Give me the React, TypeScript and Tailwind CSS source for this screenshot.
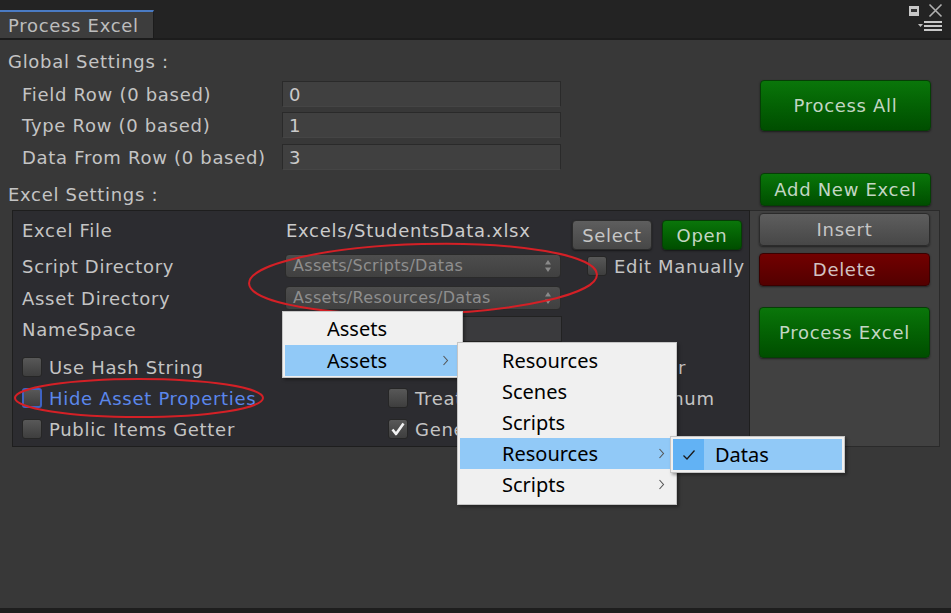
import React from "react";

type Tone = "green" | "gray" | "red";

const tones: Record<Tone, string> = {
    green: "bg-linear-to-b from-[#0a760a] to-[#004e00] border-[#053f05] text-[#c3d6c3]",
    gray: "bg-linear-to-b from-[#5e5e5e] to-[#474747] border-[#2b2b2b] text-[#c6c6c6]",
    red: "bg-linear-to-b from-[#720000] to-[#530000] border-[#3a0000] text-[#d2c2c2]",
};

function UButton({ label, tone, className }: { label: string; tone: Tone; className: string }) {
    return (
        <div
            className={`flex items-center justify-center rounded-[4px] border shadow-[0_1px_2px_rgba(0,0,0,0.5)] ${tones[tone]} ${className}`}
        >
            {label}
        </div>
    );
}

function CheckBox({ checked, focus }: { checked?: boolean; focus?: boolean }) {
    return (
        <div
            className={`flex h-[20px] w-[20px] shrink-0 items-center justify-center rounded-[3px] bg-linear-to-b from-[#585858] to-[#3e3e3e] ${
                focus ? "border-2 border-[#3e63c4]" : "border border-[#262626]"
            }`}
        >
            {checked && (
                <svg width="16" height="16" viewBox="0 0 16 16">
                    <path d="M2.5 8.5 L6 13 L13.5 2.5" fill="none" stroke="#f2f2f2" strokeWidth="2.6" strokeLinejoin="round" />
                </svg>
            )}
        </div>
    );
}

function CheckRow({ label, checked, focus }: { label: string; checked?: boolean; focus?: boolean }) {
    return (
        <div className="flex h-[20px] items-center gap-[7px] whitespace-nowrap">
            <CheckBox checked={checked} focus={focus} />
            <span className={focus ? "text-[#5b87ec]" : ""}>{label}</span>
        </div>
    );
}

// unity style popup field with the up/down arrows
function Popup({ text, className }: { text: string; className: string }) {
    return (
        <div
            className={`flex items-center justify-between rounded-[4px] border border-[#2a2a2a] bg-linear-to-b from-[#4d4d4d] to-[#404040] pl-[7px] pr-[8px] text-[16px] tracking-[0.3px] text-[#8e8e8e] ${className}`}
        >
            <span className="whitespace-nowrap">{text}</span>
            <svg width="8" height="14" viewBox="0 0 8 14">
                <path d="M4 1 L7 5.5 H1 Z M4 13 L7 8.5 H1 Z" fill="#8a8a8a" />
            </svg>
        </div>
    );
}

function Chevron() {
    return (
        <svg width="7" height="11" viewBox="0 0 7 11">
            <path d="M1.5 1 L5.5 5.5 L1.5 10" fill="none" stroke="#555" strokeWidth="1.1" />
        </svg>
    );
}

function MenuItem({ label, active, arrow }: { label: string; active?: boolean; arrow?: boolean }) {
    return (
        <div className={`flex h-[31px] items-center justify-between pl-[42px] pr-[10px] ${active ? "bg-[#91c9f7]" : ""}`}>
            <span>{label}</span>
            {arrow && <Chevron />}
        </div>
    );
}

export default function App() {
    return (
        <div className="relative flex h-[613px] w-[951px] flex-col overflow-hidden bg-[#383838] font-['DejaVu_Sans',sans-serif] text-[18px] tracking-[0.7px] text-[#c4c4c4]">
            {/* title bar */}
            <div className="relative flex h-[40px] shrink-0 items-end border-b-2 border-[#1c1c1c] bg-[#232323]">
                <div className="flex h-[28px] w-[154px] items-center border-t-2 border-r border-t-[#4a7bc4] border-r-[#1c1c1c] bg-[#3d3d3d] pl-[8px] text-[#bdbdbd]">
                    Process Excel
                </div>
                <div className="absolute right-[8px] top-[3px] flex flex-col items-end gap-[3px]">
                    <div className="flex items-center gap-[9px]">
                        <div className="flex h-[10px] w-[10px] items-center justify-center bg-[#c8c8c8]">
                            <div className="h-[3px] w-[6px] bg-[#333]" />
                        </div>
                        <svg width="15" height="15" viewBox="0 0 15 15">
                            <path d="M1.5 1.5 L13.5 13.5 M13.5 1.5 L1.5 13.5" stroke="#b0b0b0" strokeWidth="1.6" />
                        </svg>
                    </div>
                    <svg width="25" height="11" viewBox="0 0 25 11">
                        <path d="M0 3 H5 L2.5 6 Z" fill="#bdbdbd" />
                        <path d="M6 1 H24 M6 5 H24 M6 9 H24" stroke="#c8c8c8" strokeWidth="2" />
                    </svg>
                </div>
            </div>

            {/* global settings */}
            <div className="flex h-[170px] shrink-0">
                <div className="flex-1 pl-[8px]">
                    <div className="mt-[11px] h-[22px] leading-[22px]">Global Settings :</div>
                    {[
                        ["Field Row (0 based)", "0", "mt-[8px]"],
                        ["Type Row (0 based)", "1", "mt-[5px]"],
                        ["Data From Row (0 based)", "3", "mt-[6px]"],
                    ].map(([label, value, mt]) => (
                        <div key={label} className={`flex h-[26px] items-center ${mt}`}>
                            <span className="w-[274px] pl-[14px] whitespace-nowrap">{label}</span>
                            <div className="flex h-[26px] w-[279px] items-center border border-[#2a2a2a] border-b-[#454545] bg-[#404040] pl-[6px] text-[#cacaca]">
                                {value}
                            </div>
                        </div>
                    ))}
                    <div className="mt-[14px] h-[22px] leading-[22px]">Excel Settings :</div>
                </div>
                <div className="mr-[20px] w-[171px]">
                    <UButton label="Process All" tone="green" className="mt-[40px] h-[51px]" />
                    <UButton label="Add New Excel" tone="green" className="mt-[42px] h-[33px]" />
                </div>
            </div>

            {/* excel settings */}
            <div className="ml-[12px] flex h-[237px] shrink-0">
                <div className="w-[738px] border border-[#1e1e1e] bg-[#2c2c30] pl-[9px] pt-[9px]">
                    <div className="flex h-[30px] items-center">
                        <span className="-mt-[9px] w-[263px]">Excel File</span>
                        <span className="-mt-[9px] w-[287px] pl-[1px] text-[#cbcbcb]">Excels/StudentsData.xlsx</span>
                        <UButton label="Select" tone="gray" className="h-[30px] w-[80px]" />
                        <UButton label="Open" tone="green" className="ml-[10px] h-[30px] w-[80px]" />
                    </div>
                    <div className="mt-[4px] flex h-[24px] items-center">
                        <span className="w-[263px]">Script Directory</span>
                        <Popup text="Assets/Scripts/Datas" className="h-[24px] w-[276px]" />
                        <div className="ml-[26px]">
                            <CheckRow label="Edit Manually" />
                        </div>
                    </div>
                    <div className="mt-[8px] flex h-[24px] items-center">
                        <span className="w-[263px]">Asset Directory</span>
                        <Popup text="Assets/Resources/Datas" className="h-[24px] w-[276px]" />
                    </div>
                    <div className="mt-[6px] flex h-[26px] items-center">
                        <span className="w-[263px]">NameSpace</span>
                        <div className="h-[26px] w-[277px] border border-[#222] bg-[#3a3a3d]" />
                    </div>
                    <div className="mt-[15px] grid grid-cols-[366px_149px_1fr] gap-y-[11px]">
                        <CheckRow label="Use Hash String" />
                        <CheckRow label="Use Int Key" />
                        <CheckRow label="Items Getter" />
                        <CheckRow label="Hide Asset Properties" focus />
                        <CheckRow label="Treat Unknown" />
                        <CheckRow label="Generate Enum" />
                        <CheckRow label="Public Items Getter" />
                        <CheckRow label="Generate Get" checked />
                        <div />
                    </div>
                </div>
                <div className="w-[190px] border-y border-r border-[#2a2a2a] bg-[#414141] pl-[9px] pt-[2px]">
                    <UButton label="Insert" tone="gray" className="h-[33px] w-[171px]" />
                    <UButton label="Delete" tone="red" className="mt-[7px] h-[33px] w-[171px]" />
                    <UButton label="Process Excel" tone="green" className="mt-[21px] h-[51px] w-[171px]" />
                </div>
            </div>

            <div className="flex-1" />
            <div className="h-[5px] shrink-0 bg-[#1e1e1e]" />

            {/* red annotation ellipses */}
            <svg className="pointer-events-none absolute left-0 top-0" width="951" height="613">
                <ellipse cx="423" cy="279" rx="174" ry="35" fill="none" stroke="#d42026" strokeWidth="2" transform="rotate(-1.5 423 279)" />
                <ellipse cx="139" cy="398" rx="124" ry="19" fill="none" stroke="#d42026" strokeWidth="2" />
            </svg>

            {/* popup menus */}
            <div className="absolute left-[282px] top-[311px] w-[181px] border border-[#c5c5c5] bg-[#f0f0f0] py-[1px] pl-[2px] pr-[1px] font-['Noto_Sans',sans-serif] text-[20px] tracking-normal text-black shadow-[2px_2px_3px_rgba(0,0,0,0.35)]">
                <div className="flex h-[32px] items-center pl-[42px]">Assets</div>
                <div className="flex h-[31px] items-center justify-between bg-[#91c9f7] pl-[42px] pr-[12px]">
                    <span>Assets</span>
                    <Chevron />
                </div>
            </div>
            <div className="absolute left-[457px] top-[342px] w-[220px] border border-[#c5c5c5] bg-[#f0f0f0] pb-[4px] pl-[2px] pr-[1px] pt-[2px] font-['Noto_Sans',sans-serif] text-[20px] tracking-normal text-black shadow-[2px_2px_3px_rgba(0,0,0,0.35)]">
                <MenuItem label="Resources" />
                <MenuItem label="Scenes" />
                <MenuItem label="Scripts" />
                <MenuItem label="Resources" active arrow />
                <MenuItem label="Scripts" arrow />
            </div>
            <div className="absolute left-[670px] top-[436px] w-[175px] border border-[#c5c5c5] bg-[#f0f0f0] p-[2px] font-['Noto_Sans',sans-serif] text-[20px] tracking-normal text-black shadow-[2px_2px_3px_rgba(0,0,0,0.35)]">
                <div className="flex h-[31px] items-center bg-[#91c9f7]">
                    <div className="flex h-full w-[31px] items-center justify-center bg-[#62b2f4]">
                        <svg width="14" height="12" viewBox="0 0 14 12">
                            <path d="M1.5 6.5 L5 10 L12.5 1.5" fill="none" stroke="#1a1a1a" strokeWidth="1.3" />
                        </svg>
                    </div>
                    <span className="pl-[11px]">Datas</span>
                </div>
            </div>
        </div>
    );
}
